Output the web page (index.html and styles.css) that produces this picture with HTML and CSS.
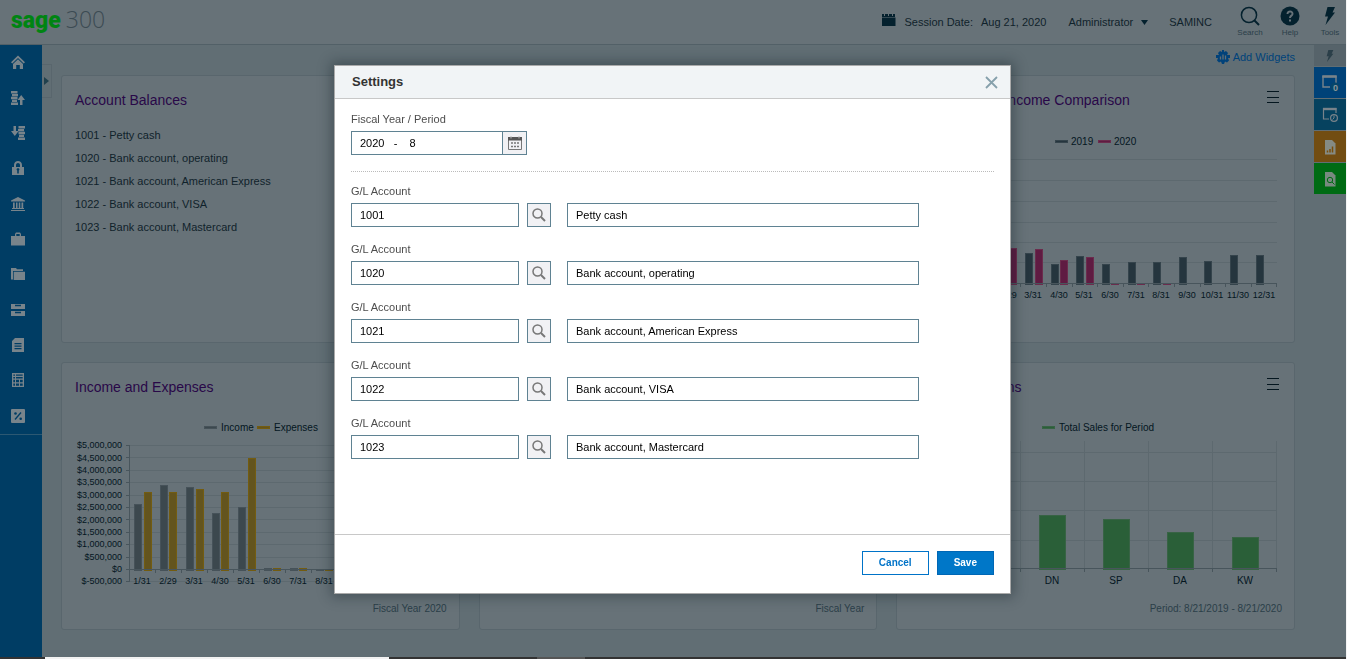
FILE: index.html
```html
<!DOCTYPE html>
<html lang="en">
<head>
<meta charset="utf-8">
<title>Sage 300</title>
<link rel="stylesheet" href="styles.css">
</head>
<body>
<div class="app">
  <header class="topbar">
    <div class="brand"><span class="logo">sage</span><span class="edition">300</span></div>
    <div class="session">
      <svg width="14" height="18" viewBox="0 0 14 18"><path d="M0 1h2v2h1V1h3v2h1V1h3v2h1V1h2v3H0zM0 4.500h13.500V13H0z" fill="#04212e"/></svg>
      <span>Session Date:</span><span>Aug 21, 2020</span>
    </div>
    <button class="user">Administrator <svg width="7" height="5" viewBox="0 0 7 5"><path d="M0 0h7L3.500 5z" fill="#04212e"/></svg></button>
    <span class="company">SAMINC</span>
    <button class="action search"><svg width="20" height="20" viewBox="0 0 20 20" fill="none" stroke="#04212e"><circle cx="9" cy="9" r="7.600" stroke-width="1.500"/><path d="M14.500 14.500L19 19" stroke-width="2"/></svg>Search</button>
    <button class="action help"><svg width="20" height="20" viewBox="0 0 20 20"><circle cx="10" cy="10" r="9.500" fill="#04212e"/><path d="M7.500 8C7.500 4.500 12.800 4.700 12.500 8C12.300 9.700 10 9.700 10 12" fill="none" stroke="#677278" stroke-width="2"/><rect x="9" y="13.500" width="2" height="2" fill="#677278"/></svg>Help</button>
    <button class="action tools"><svg width="12" height="20" viewBox="0 0 12 20"><path d="M3.500 1H11L8.500 6.500H11L1.500 19L4 10.500H1z" fill="#04212e"/></svg>Tools</button>
  </header>

  <div class="workspace">
    <nav class="sidebar" aria-label="Modules">
      <ul class="modules">
        <li><a href="#" aria-label="Home"><svg class="ico" viewBox="0 0 14 14"><path d="M0 7.200L7 .500L14 7.200L12.700 8.400L7 3L1.300 8.400zM2 9L7 4.300L12 9V14H8.800V10H5.200V14H2z"/></svg></a></li>
        <li><a href="#" aria-label="Payables"><svg class="ico" viewBox="0 0 14 14"><path d="M0 0h6.500v2.400H0zM1 2.900h6v2.400H1zM0 5.800h6.500v2.400H0zM1 8.700h5v2.400H1zM0 11.600h7V14H0zM10.200 4L14 9H11.500V14H9V9H6.500z"/></svg></a></li>
        <li><a href="#" aria-label="Receivables"><svg class="ico" viewBox="0 0 14 14"><path d="M7.500 0H14v2.400H7.500zM7 2.900h6v2.400H7zM7.500 5.800H14v2.400H7.500zM8 8.700h5v2.400H8zM7 11.600h7V14H7zM2.500 0H5v5H7.600L3.800 10L0 5H2.500z"/></svg></a></li>
        <li><a href="#" aria-label="Security"><svg class="ico" viewBox="0 0 14 14"><path d="M1 6H3V4C3-1.300 11-1.300 11 4V6h2v8H1zM5 6h4V4C9 1.300 5 1.300 5 4zM6.200 9.500V12.500h1.600V9.500C9 8.500 8.300 7.200 7 7.200S5 8.500 6.200 9.500z" fill-rule="evenodd"/></svg></a></li>
        <li><a href="#" aria-label="Bank"><svg class="ico" viewBox="0 0 14 14"><path d="M7 0L14 3.500V4.500H0V3.500zM2 5.500h1.700V11H2zM5 5.500h1.500V11H5zM7.800 5.500h1.500V11H7.800zM10.500 5.500h1.700V11h-1.700zM1 11h12v1H1zM0 13h14v1H0z"/></svg></a></li>
        <li><a href="#" aria-label="Projects"><svg class="ico" viewBox="0 0 14 14"><path d="M0 4H4V2L5 0.500H9L10 2V4h4v9.500H0zM5.300 4h3.400V2H5.300z" fill-rule="evenodd"/></svg></a></li>
        <li><a href="#" aria-label="Folders"><svg class="ico" viewBox="0 0 14 14"><path d="M0 1H5L6 2.300H12V4H2V12.500H0zM2.700 4.700H14V13H2.700z"/></svg></a></li>
        <li><a href="#" aria-label="Inventory"><svg class="ico" viewBox="0 0 14 14"><path d="M0 1h14v5H0zM4 1.800V3.200h6V1.800zM0 8h14v5H0zM4 8.800v1.400h6V8.800z" fill-rule="evenodd"/></svg></a></li>
        <li><a href="#" aria-label="Orders"><svg class="ico" viewBox="0 0 14 14"><path d="M4 0H13V14H1V3zM3.500 5h7v1.200h-7zM3.500 7.500h7v1.200h-7zM3.500 10h7v1.200h-7z" fill-rule="evenodd"/></svg></a></li>
        <li><a href="#" aria-label="Reports"><svg class="ico" viewBox="0 0 14 14"><path d="M1 0H13V14H1zM2.300 1.500V2.700H4V1.500zM5 1.500V2.700h6.700V1.500zM2.300 4V5.500H4V4zM5 4V5.500h6.700V4zM2.300 6.700v2.500H4V6.700zM5 6.700v2.500h3V6.700zM9 6.700v2.500h2.700V6.700zM2.300 10.500v2.200H4v-2.200zM5 10.500v2.200h3v-2.200zM9 10.500v2.200h2.700v-2.200z" fill-rule="evenodd"/></svg></a></li>
        <li><a href="#" aria-label="Tax"><svg class="ico" viewBox="0 0 14 14"><rect width="14" height="14" rx="1"/><path d="M4 10.500L10 3.500" stroke="#003d64" stroke-width="1.300"/><circle cx="4.500" cy="4.500" r="1.300" fill="#003d64"/><circle cx="9.700" cy="9.700" r="1.300" fill="#003d64"/></svg></a></li>
      </ul>
    </nav>

    <main class="main">
      <button class="expander" aria-label="Expand menu"><svg width="5" height="8" viewBox="0 0 5 8"><path d="M0 0L5 4L0 8z" fill="#21404d"/></svg></button>
      <div class="toolbar"><a href="#" class="add"><svg width="14" height="14" viewBox="0 0 14 14"><path d="M6 0H8V2L10 1L12 3L11 5H14V8H12L13 10.500L11 12.500L9 11.500L8 14H6L5 11.500L3 12.500L1 10.500L2 8H0V5H3L2 3L4 1L6 2z" fill="#00427a"/><path d="M4.500 6.500v3M7 4.500v5M9.500 5.500v4" stroke="#616e74" stroke-width="1.300"/></svg>Add Widgets</a></div>
      <div class="grid">
        <section class="card">
          <h2>Account Balances</h2>
          <ul class="accounts"><li>1001 - Petty cash</li><li>1020 - Bank account, operating</li><li>1021 - Bank account, American Express</li><li>1022 - Bank account, VISA</li><li>1023 - Bank account, Mastercard</li></ul>
        </section>
        <section class="card"></section>
        <section class="card">
          <h2>Monthly Gross Income Comparison</h2>
          <button class="menu" aria-label="Widget menu"></button>
          <svg class="chart" viewBox="898 128 396 175" preserveAspectRatio="xMinYMin meet">
            <path class="navy" d="M1056 140h12v2h-12z"/><text class="legend" x="1072" y="145">2019</text>
            <path class="pink" d="M1099 140h12v2h-12z"/><text class="legend" x="1115" y="145">2020</text>
            <path class="gridline" d="M970 159.500h308M970 180.500h308M970 201.500h308M970 222.500h308M970 242.500h308M970 262.500h308"/>
            <path class="navy bar" d="M1026 253h7v31h-7zM1052 264h7v20h-7zM1077 256h7v28h-7zM1103 264h7v20h-7zM1129 262h7v22h-7zM1154 262h7v22h-7zM1180 257h7v27h-7zM1205 261h7v23h-7zM1231 255h7v29h-7zM1257 255h7v29h-7z"/>
            <path class="pink bar" d="M1010 248h7v36h-7zM1036 249h7v35h-7zM1061 260h7v24h-7zM1087 257h7v27h-7zM1112 283h7v1h-7zM1138 283h7v1h-7zM1164 283h7v1h-7z"/>
            <path class="axis" d="M970 283.500h308M1021.500 284v3M1047.500 284v3M1073.500 284v3M1098.500 284v3M1124.500 284v3M1149.500 284v3M1175.500 284v3M1201.500 284v3M1226.500 284v3M1252.500 284v3M1277.500 284v3"/>
            <g class="tick mid"><text x="1009" y="298">2/29</text><text x="1034" y="298">3/31</text><text x="1060" y="298">4/30</text><text x="1085" y="298">5/31</text><text x="1111" y="298">6/30</text><text x="1137" y="298">7/31</text><text x="1162" y="298">8/31</text><text x="1188" y="298">9/30</text><text x="1213" y="298">10/31</text><text x="1239" y="298">11/30</text><text x="1265" y="298">12/31</text></g>
          </svg>
        </section>
        <section class="card">
          <h2>Income and Expenses</h2>
          <svg class="chart" viewBox="63 415 396 175" preserveAspectRatio="xMinYMin meet">
            <path class="grey" d="M205 426h12v2h-12z"/><text class="legend" x="222" y="431">Income</text>
            <path class="gold" d="M258 426h12v2h-12z"/><text class="legend" x="275" y="431">Expenses</text>
            <path class="gridline" d="M131 445.500h312M131 457.500h312M131 470.500h312M131 482.500h312M131 495.500h312M131 507.500h312M131 519.500h312M131 532.500h312M131 544.500h312M131 557.500h312M131 581.500h312"/>
            <path class="grey bar" d="M135 504h7v66h-7zM161 485h7v85h-7zM187 487h7v83h-7zM213 513h7v57h-7zM239 507h7v63h-7zM265 568h7v2h-7zM291 568h7v2h-7zM317 569h7v1h-7z"/>
            <path class="gold bar" d="M145 492h7v78h-7zM170 492h7v78h-7zM197 489h7v81h-7zM222 492h7v78h-7zM249 458h7v112h-7zM274 568h7v2h-7zM300 568h7v2h-7zM326 569h7v1h-7z"/>
            <path class="axis" d="M130.500 445v137M127 445.500h3M127 457.500h3M127 470.500h3M127 482.500h3M127 495.500h3M127 507.500h3M127 519.500h3M127 532.500h3M127 544.500h3M127 557.500h3M127 569.500h316M127 581.500h3M156.500 570v3M182.500 570v3M208.500 570v3M234.500 570v3M260.500 570v3M286.500 570v3M312.500 570v3"/>
            <g class="tick end"><text x="123" y="448">$5,000,000</text><text x="123" y="461">$4,500,000</text><text x="123" y="473">$4,000,000</text><text x="123" y="485">$3,500,000</text><text x="123" y="498">$3,000,000</text><text x="123" y="510">$2,500,000</text><text x="123" y="523">$2,000,000</text><text x="123" y="535">$1,500,000</text><text x="123" y="547">$1,000,000</text><text x="123" y="560">$500,000</text><text x="123" y="572">$0</text><text x="123" y="584">$-500,000</text></g>
            <g class="tick mid"><text x="143" y="584">1/31</text><text x="169" y="584">2/29</text><text x="195" y="584">3/31</text><text x="221" y="584">4/30</text><text x="247" y="584">5/31</text><text x="273" y="584">6/30</text><text x="299" y="584">7/31</text><text x="325" y="584">8/31</text></g>
          </svg>
          <p class="note">Fiscal Year 2020</p>
        </section>
        <section class="card"><p class="note">Fiscal Year</p></section>
        <section class="card">
          <h2>Top Salespersons</h2>
          <button class="menu" aria-label="Widget menu"></button>
          <svg class="chart" viewBox="898 415 396 175" preserveAspectRatio="xMinYMin meet">
            <path class="green" d="M1043 426h12v2h-12z"/><text class="legend" x="1060" y="431">Total Sales for Period</text>
            <path class="gridline" d="M957 452.500h321M957 481.500h321M957 510.500h321M957 540.500h321M1021.500 441v128M1085.500 441v128M1149.500 441v128M1213.500 441v128M1277.500 441v128"/>
            <path class="green bar" d="M1040 515h26v54h-26zM1104 519h26v50h-26zM1168 532h26v37h-26zM1233 537h26v32h-26z"/>
            <path class="axis" d="M957 568.500h321M1021.500 569v3M1085.500 569v3M1149.500 569v3M1213.500 569v3M1277.500 569v3"/>
            <g class="legend mid"><text x="1053" y="584">DN</text><text x="1117" y="584">SP</text><text x="1181" y="584">DA</text><text x="1246" y="584">KW</text></g>
          </svg>
          <p class="note">Period: 8/21/2019 - 8/21/2020</p>
        </section>
      </div>
    </main>

    <aside class="dock">
      <button class="tile slim" aria-label="Quick tools"><svg width="8" height="14" viewBox="0 0 12 20"><path d="M3.500 1H11L8.500 6.500H11L1.500 19L4 10.500H1z" fill="#2b3f49"/></svg></button>
      <button class="tile blue" aria-label="Open windows"><svg width="18" height="18" viewBox="0 0 18 18"><path d="M9 13H2V2.500H15V9" fill="none" stroke="#78838a" stroke-width="1.400"/><path d="M1.300 2.500h14.400" stroke="#78838a" stroke-width="2.500"/><circle cx="14" cy="13" r="4.500" fill="#06456a"/></svg><span class="count">0</span></button>
      <button class="tile teal" aria-label="Recent windows"><svg width="18" height="18" viewBox="0 0 18 18" fill="none" stroke="#78838a"><path d="M8 13H2.500V2.500H15V7" stroke-width="1.200"/><path d="M2 3H15.500" stroke-width="2.400"/><circle cx="13" cy="12" r="3.400" stroke-width="1.200"/><path d="M13 9.500V12L11.500 13.500"/></svg></button>
      <button class="tile amber" aria-label="Reports"><svg width="14" height="16" viewBox="0 0 14 16"><path d="M2 1H9L12.500 4.500V15.500H2z" fill="#858b84"/><path d="M4.500 13.500v-2M7 13.500V10M9.500 13.500V7.500" stroke="#7a4e08" stroke-width="1.500"/></svg></button>
      <button class="tile lime" aria-label="Inquiries"><svg width="14" height="16" viewBox="0 0 14 16"><path d="M2 1H9L12.500 4.500V15.500H2z" fill="#788a80"/><circle cx="7" cy="9" r="2.700" fill="none" stroke="#006b14"/><path d="M9 11L11.500 13.500" stroke="#006b14"/></svg></button>
    </aside>
  </div>
  <footer class="taskbar"><span class="preview"></span><span class="current"></span></footer>
</div>

<div class="layer">
  <form class="dialog" role="dialog" aria-labelledby="title">
    <div class="dialog-head"><h1 id="title">Settings</h1><button type="button" class="close" aria-label="Close"><svg width="13" height="13" viewBox="0 0 13 13"><path d="M1 1L12 12M12 1L1 12" stroke="#86a0ab" stroke-width="1.800"/></svg></button></div>
    <div class="dialog-body">
      <div class="period">
        <label for="period">Fiscal Year / Period</label>
        <div class="combo"><input id="period" value="2020   -    8"><button type="button" aria-label="Pick period"><svg width="14" height="14" viewBox="0 0 14 14"><path d="M.5 2.500h13v11H.5z" fill="#f1f1f4" stroke="#777"/><path d="M0 1h14v3.500H0z" fill="#555"/><path d="M3 0v2.500M11 0v2.500" stroke="#bbb"/><path d="M3 7h2M6 7h2M9 7h2M3 10.500h2M6 10.500h2M9 10.500h2" stroke="#777" stroke-width="1.500"/></svg></button></div>
      </div>
      <div class="rows">
        <div class="row"><label for="a1">G/L Account</label><div class="fields"><input id="a1" class="code" value="1001"><button type="button" class="find" aria-label="Find"><svg width="14" height="14" viewBox="0 0 14 14"><circle cx="5.500" cy="5.500" r="4.500"/><path d="M9 9L13 13"/></svg></button><input class="desc" aria-label="Description" value="Petty cash"></div></div>
        <div class="row"><label for="a2">G/L Account</label><div class="fields"><input id="a2" class="code" value="1020"><button type="button" class="find" aria-label="Find"><svg width="14" height="14" viewBox="0 0 14 14"><circle cx="5.500" cy="5.500" r="4.500"/><path d="M9 9L13 13"/></svg></button><input class="desc" aria-label="Description" value="Bank account, operating"></div></div>
        <div class="row"><label for="a3">G/L Account</label><div class="fields"><input id="a3" class="code" value="1021"><button type="button" class="find" aria-label="Find"><svg width="14" height="14" viewBox="0 0 14 14"><circle cx="5.500" cy="5.500" r="4.500"/><path d="M9 9L13 13"/></svg></button><input class="desc" aria-label="Description" value="Bank account, American Express"></div></div>
        <div class="row"><label for="a4">G/L Account</label><div class="fields"><input id="a4" class="code" value="1022"><button type="button" class="find" aria-label="Find"><svg width="14" height="14" viewBox="0 0 14 14"><circle cx="5.500" cy="5.500" r="4.500"/><path d="M9 9L13 13"/></svg></button><input class="desc" aria-label="Description" value="Bank account, VISA"></div></div>
        <div class="row"><label for="a5">G/L Account</label><div class="fields"><input id="a5" class="code" value="1023"><button type="button" class="find" aria-label="Find"><svg width="14" height="14" viewBox="0 0 14 14"><circle cx="5.500" cy="5.500" r="4.500"/><path d="M9 9L13 13"/></svg></button><input class="desc" aria-label="Description" value="Bank account, Mastercard"></div></div>
      </div>
    </div>
    <div class="dialog-foot"><button type="button" class="btn">Cancel</button><button type="button" class="btn primary">Save</button></div>
  </form>
</div>
</body>
</html>
```
FILE: styles.css
```css
* { box-sizing: border-box; }
body { margin: 0; font: 11px/16px "Liberation Sans", Arial, sans-serif; color: #10222b; }
h1, h2, ul, p { margin: 0; padding: 0; list-style: none; }
button { padding: 0; border: 0; background: none; font: inherit; color: inherit; }
input { font: inherit; color: #000; }
svg { display: block; flex: none; }

.app { display: flex; flex-direction: column; min-height: 100vh; border-right: 1px solid #f4f4f4; background: #616e74; }
.topbar { display: flex; align-items: center; height: 45px; padding-left: 11px; border-bottom: 1px solid #526067; background: #677278; }
.brand { display: flex; align-items: baseline; gap: 5px; flex: 1; padding-bottom: 4px; }
.logo { font: 900 23px/28px Roboto, sans-serif; color: #008412; }
.edition { font: 300 23px/28px "Open Sans", sans-serif; color: #3c4b53; }
.session { display: flex; align-items: center; gap: 8px; margin-right: 22px; }
.user { display: flex; align-items: center; gap: 8px; margin-right: 21px; }
.company { margin-right: 22px; }
.action { display: flex; flex-direction: column; align-items: center; width: 32px; gap: 2px; font-size: 8px; line-height: 10px; color: #2b3f49; }
.help { margin-left: 8px; }
.tools { margin-left: 8px; }

.workspace { display: flex; flex: 1; }
.sidebar { width: 42px; background: #003d64; }
.modules { display: flex; flex-direction: column; height: 390px; border-bottom: 1px solid #2c5872; }
.modules li { flex: 1; display: flex; align-items: center; padding-left: 11px; padding-bottom: 1px; }
.ico { width: 14px; height: 14px; fill: #78848b; }
.main { position: relative; flex: 1; padding: 0 19px 27px 19px; display: flex; flex-direction: column; }
.expander { position: absolute; left: 0; top: 19px; width: 10px; height: 34px; padding-left: 2px; border: 1px solid #59666d; border-left: 0; }
.toolbar { display: flex; justify-content: flex-end; align-items: center; height: 30px; padding-bottom: 6px; }
.add { display: flex; align-items: center; gap: 3px; color: #00427a; text-decoration: none; }
.grid { flex: 1; display: grid; grid-template-columns: repeat(3, 1fr); grid-auto-rows: 1fr; gap: 19px; }
.card { position: relative; display: flex; flex-direction: column; border: 1px solid #59666d; border-radius: 3px; background: #677278; }
.card h2 { padding: 14px 13px 0; font-size: 14px; line-height: 20px; font-weight: 400; color: #290848; }
.accounts { padding: 14px 13px; line-height: 23px; }
.menu { position: absolute; right: 15px; top: 15px; width: 12px; height: 12px; border-top: 1px solid #04161f; border-bottom: 1px solid #04161f; }
.menu::before { content: ""; display: block; height: 1px; background: #04161f; }
.chart { width: 100%; height: 175px; margin-top: 18px; overflow: visible; shape-rendering: crispEdges; }
.note { margin-top: auto; padding: 0 12px 12px; text-align: right; font-size: 10px; color: #2b3f49; }
.legend { font-size: 10px; fill: #04161f; }
.tick { font-size: 9px; fill: #04161f; }
.mid { text-anchor: middle; }
.end { text-anchor: end; }
.gridline { stroke: #5d696f; }
.axis { stroke: #48555c; }
.bar { stroke-width: 1; }
.navy { fill: #25353e; stroke: #35444c; }
.pink { fill: #5f1b42; stroke: #6b2c4d; }
.grey { fill: #3c484e; stroke: #465259; }
.gold { fill: #63541e; stroke: #735c10; }
.green { fill: #2a5f38; stroke: #386345; }

.dock { display: flex; flex-direction: column; gap: 1px; width: 32px; }
.tile { position: relative; display: flex; align-items: center; justify-content: center; height: 31px; }
.slim { height: 21px; background: #56636a; }
.blue { background: #004278; }
.teal { background: #06425f; }
.amber { background: #724d12; }
.lime { background: #006b14; }
.count { position: absolute; right: 8px; bottom: 4px; font-size: 9px; line-height: 12px; font-weight: 700; color: #8c969b; }
.taskbar { display: flex; height: 2px; background: #333; }
.preview { width: 344px; margin-left: 45px; background: #f2f2f2; }
.current { width: 48px; margin-left: 148px; background: #555; }

.layer { position: fixed; inset: 0 2px 0 0; display: flex; align-items: center; justify-content: center; }
.dialog { width: 677px; border: 1px solid #aaa; background: #fff; box-shadow: 0 0 12px 3px rgba(20, 35, 42, .4); }
.dialog-head { display: flex; align-items: center; justify-content: space-between; height: 33px; padding: 0 12px 0 17px; border-bottom: 1px solid #c8c8c8; background: #f1f4f6; }
.dialog-head h1 { font-size: 13px; line-height: 16px; color: #333; }
.dialog-body { min-height: 435px; padding: 12px 16px; color: #4d4d4d; }
.dialog label { display: block; height: 20px; line-height: 16px; }
.dialog input { height: 24px; padding: 0 8px; border: 1px solid #5f8292; background: #fff; }
.period { padding-bottom: 16px; border-bottom: 1px dotted #bbb; }
.combo { display: flex; }
.combo input { width: 152px; white-space: pre; }
.combo button, .find { display: flex; align-items: center; justify-content: center; width: 24px; height: 24px; border: 1px solid #5f8292; background: #f1f1f4; }
.combo button { border-left: 0; }
.find { margin: 0 16px 0 8px; fill: none; stroke: #777; stroke-width: 2; }
.find circle { stroke-width: 1.5; }
.rows { display: grid; gap: 14px; padding-top: 11px; }
.fields { display: flex; }
.code { width: 168px; }
.desc { width: 352px; }
.dialog-foot { display: flex; justify-content: flex-end; gap: 8px; padding: 16px 16px 18px; border-top: 1px solid #c8c8c8; }
.btn { height: 24px; padding: 0 16px; border: 1px solid #0073c8; color: #0073c8; background: #fff; font-size: 10px; font-weight: 700; }
.primary { color: #fff; background: #0077c8; border-color: #0067b5; }
```
